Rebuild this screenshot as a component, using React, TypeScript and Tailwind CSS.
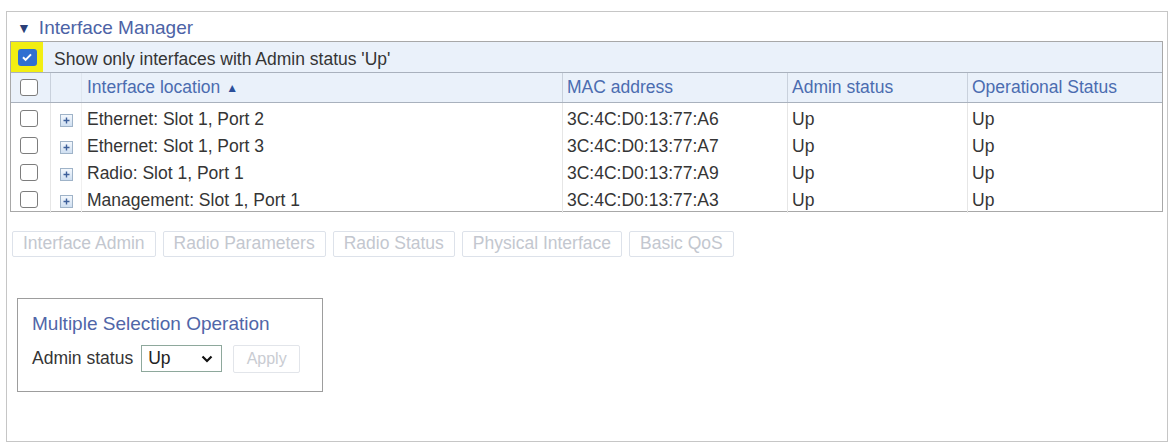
const rows = [
  { loc: "Ethernet: Slot 1, Port 2", mac: "3C:4C:D0:13:77:A6", admin: "Up", oper: "Up" },
  { loc: "Ethernet: Slot 1, Port 3", mac: "3C:4C:D0:13:77:A7", admin: "Up", oper: "Up" },
  { loc: "Radio: Slot 1, Port 1", mac: "3C:4C:D0:13:77:A9", admin: "Up", oper: "Up" },
  { loc: "Management: Slot 1, Port 1", mac: "3C:4C:D0:13:77:A3", admin: "Up", oper: "Up" },
];

const tabs = ["Interface Admin", "Radio Parameters", "Radio Status", "Physical Interface", "Basic QoS"];

function Box() {
  return <span className="block h-[17px] w-[18px] rounded-[3px] border border-[#7d7d7d] bg-white" />;
}

function Expander() {
  return (
    <span className="mt-[11px] flex h-[13px] w-[13px] items-center justify-center border border-[#9fb3c8] bg-gradient-to-b from-[#f4f8fd] to-[#cfdff1]">
      <svg viewBox="0 0 9 9" className="h-[9px] w-[9px]">
        <path d="M4.5 1.5v6M1.5 4.5h6" stroke="#3d5f9a" strokeWidth="1.4" />
      </svg>
    </span>
  );
}

export default function App() {
  const cols = "grid grid-cols-[39px_31px_481px_225px_180px_1fr]";

  return (
    <div className="h-[445px] w-[1173px] bg-white pl-[6px] pt-[11px] font-['Liberation_Sans',Arial,sans-serif] text-[17.5px] text-[#353535]">
      <div className="flex h-[431px] w-[1162px] flex-col border border-[#c6c6c6] px-[3px]">
        {/* section title */}
        <div className="flex h-[29px] items-center gap-[8px] pl-[7px] pt-[3px] text-[19px] text-[#4c63a6]">
          <span className="text-[14px] text-[#2b3f78]">▼</span>
          <span>Interface Manager</span>
        </div>

        {/* table */}
        <div className="w-[1153px] border border-[#a8a8a8]">
          <div className="flex h-[30px] items-stretch bg-[#eaf1fa]">
            <div className="flex w-[32px] items-center justify-center bg-[#f2ee12]">
              <span className="flex h-[17px] w-[19px] items-center justify-center rounded-[3px] bg-[#2f6fd1]">
                <svg viewBox="0 0 12 12" className="h-[12px] w-[12px]">
                  <path d="M2 6.3l2.6 2.6L10 3.4" fill="none" stroke="#fff" strokeWidth="2" />
                </svg>
              </span>
            </div>
            <div className="flex items-center pl-[11px] pt-[4px]">Show only interfaces with Admin status 'Up'</div>
          </div>

          <div className={`${cols} h-[31px] border-t border-b border-[#a9b1bd] bg-[#eaf1fa] text-[#4b6cb0]`}>
            <div className="flex items-center pl-[9px]">
              <Box />
            </div>
            <div className="border-l border-[#c9d1dc]" />
            <div className="flex items-center gap-[6px] border-l border-[#dfe6ef] pl-[5px]">
              Interface location <span className="text-[12px] text-[#2b4f9a]">▲</span>
            </div>
            <div className="flex items-center border-l border-[#c9d1dc] pl-[4px]">MAC address</div>
            <div className="flex items-center border-l border-[#c9d1dc] pl-[4px]">Admin status</div>
            <div className="flex items-center border-l border-[#c9d1dc] pl-[4px]">Operational Status</div>
          </div>

          {rows.map((r) => (
            <div key={r.loc} className={`${cols} h-[27px]`}>
              <div className="flex items-center pl-[9px] pt-[2px]">
                <Box />
              </div>
              <div className="flex justify-center border-l border-[#e6e6e6] pl-[1px]">
                <Expander />
              </div>
              <div className="flex items-center border-l border-[#f0f0f0] pl-[5px] pt-[3px]">{r.loc}</div>
              <div className="flex items-center border-l border-[#e6e6e6] pl-[4px] pt-[3px]">{r.mac}</div>
              <div className="flex items-center border-l border-[#e6e6e6] pl-[4px] pt-[3px]">{r.admin}</div>
              <div className="flex items-center border-l border-[#e6e6e6] pl-[4px] pt-[3px]">{r.oper}</div>
            </div>
          ))}
        </div>

        {/* disabled tab buttons */}
        <div className="ml-[2px] mt-[19px] flex gap-[7px]">
          {tabs.map((t) => (
            <button
              key={t}
              disabled
              className="h-[26px] rounded-[2px] border border-[#dde2ea] bg-white px-[10px] text-[17.5px] leading-none text-[#c3c7cf]"
            >
              {t}
            </button>
          ))}
        </div>

        {/* multiple selection */}
        <div className="ml-[7px] mt-[41px] h-[94px] w-[306px] border border-[#9d9d9d] px-[14px] pt-[11px]">
          <div className="text-[19px] text-[#5066a8]">Multiple Selection Operation</div>
          <div className="mt-[6px] flex items-center gap-[8px]">
            <span>Admin status</span>
            <span className="flex h-[27px] w-[81px] items-center justify-between border border-[#8ea89c] bg-white pl-[6px] pr-[8px] text-[#222]">
              Up
              <svg viewBox="0 0 12 8" className="h-[8px] w-[12px]">
                <path d="M1.5 1.5L6 6l4.5-4.5" fill="none" stroke="#111" strokeWidth="2.2" />
              </svg>
            </span>
            <button
              disabled
              className="ml-[3px] h-[28px] w-[67px] rounded-[2px] border border-[#e2e5ea] bg-white text-[16px] text-[#c9ccd2]"
            >
              Apply
            </button>
          </div>
        </div>
      </div>
    </div>
  );
}
